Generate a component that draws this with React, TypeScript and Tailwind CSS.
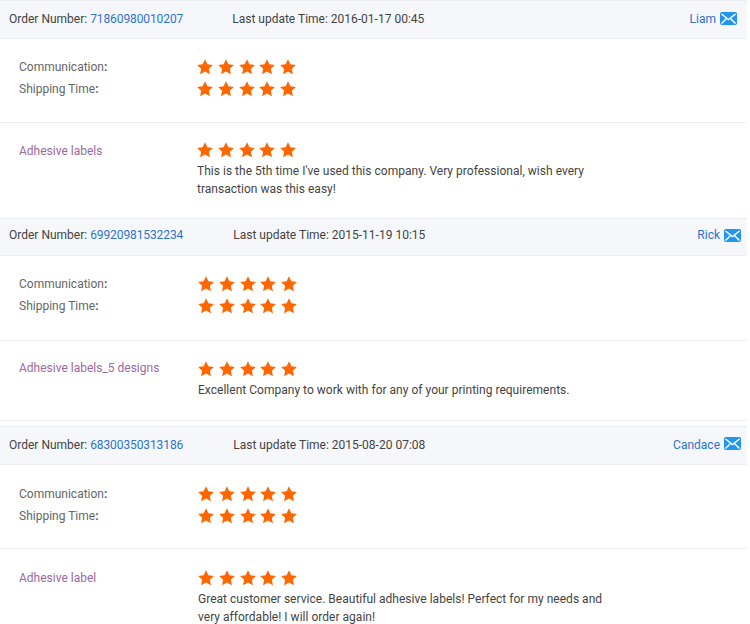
interface Review {
  order: string;
  updated: string;
  user: string;
  product: string;
  comment: string[];
  headerClass: string;
  updatedClass: string;
  iconClass: string;
  ratingsClass: string;
  productClass: string;
  labelClass: string;
  productLabelClass: string;
}

const reviews: Review[] = [
  {
    order: '71860980010207',
    updated: '2016-01-17 00:45',
    user: 'Liam',
    product: 'Adhesive labels',
    comment: [
      "This is the 5th time I've used this company. Very professional, wish every",
      'transaction was this easy!',
    ],
    headerClass: 'h-[39px] pb-px pr-[10px]',
    updatedClass: 'ml-[49px]',
    iconClass: 'mb-[2px]',
    ratingsClass: 'h-[84px] pt-[17px]',
    productClass: 'h-[95px] pt-[16px]',
    labelClass: 'w-[178px]',
    productLabelClass: 'mt-[2px]',
  },
  {
    order: '69920981532234',
    updated: '2015-11-19 10:15',
    user: 'Rick',
    product: 'Adhesive labels_5 designs',
    comment: ['Excellent Company to work with for any of your printing requirements.'],
    headerClass: 'h-[38px] pb-[4px] pr-[6px]',
    updatedClass: 'ml-[50px]',
    iconClass: '',
    ratingsClass: 'h-[85px] pt-[17px]',
    productClass: 'h-[80px] border-b border-[#eceef2] pt-[17px]',
    labelClass: 'w-[179px]',
    productLabelClass: '',
  },
  {
    order: '68300350313186',
    updated: '2015-08-20 07:08',
    user: 'Candace',
    product: 'Adhesive label',
    comment: [
      'Great customer service. Beautiful adhesive labels! Perfect for my needs and',
      'very affordable! I will order again!',
    ],
    headerClass: 'mt-[5px] h-[39px] pb-[2px] pr-[6px]',
    updatedClass: 'ml-[50px]',
    iconClass: 'mb-[2px]',
    ratingsClass: 'h-[84px] pt-[18px]',
    productClass: 'h-[96px] pt-[18px]',
    labelClass: 'w-[179px]',
    productLabelClass: 'mt-px',
  },
];

function Stars() {
  return (
    <div className="flex h-[22px] items-center gap-[4.8px]">
      {[0, 1, 2, 3, 4].map(i => (
        <svg key={i} width="16" height="16" viewBox="0 0 24 24" fill="#ff6600">
          <path d="M12 .5l3.6 7.5 8.2 1-6 5.6 1.6 8.2-7.4-4-7.4 4 1.6-8.2-6-5.6 8.2-1z" />
        </svg>
      ))}
    </div>
  );
}

function MailIcon({ className }: { className: string }) {
  return (
    <svg className={`ml-[4px] ${className}`} width="17" height="13" viewBox="0 0 17 13">
      <rect width="17" height="13" rx="2" fill="#2196ee" />
      <path d="M1.5 2l7 5.5 7-5.5M1.5 11.5l5-5M15.5 11.5l-5-5" fill="none" stroke="#fff" strokeWidth="1.5" />
    </svg>
  );
}

function ReviewCard({ review }: { review: Review }) {
  return (
    <div>
      <div className={`flex items-center border-y border-[#eceef2] bg-[#f5f7fb] pl-[9px] ${review.headerClass}`}>
        <span className="text-[#444]">Order Number: </span>
        <a className="ml-[3px] tracking-[-0.1px] text-[#2f72cc]">{review.order}</a>
        <span className={`text-[#444] ${review.updatedClass}`}>Last update Time: {review.updated}</span>
        <a className="ml-auto text-[#2f72cc]">{review.user}</a>
        <MailIcon className={review.iconClass} />
      </div>
      <div className={`flex border-b border-[#eceef2] pl-[19px] text-[#666] ${review.ratingsClass}`}>
        <div className={`leading-[22px] ${review.labelClass}`}>
          <div>Communication<b className="font-bold">:</b></div>
          <div>Shipping Time<b className="font-bold">:</b></div>
        </div>
        <div>
          <Stars />
          <Stars />
        </div>
      </div>
      <div className={`flex pl-[19px] ${review.productClass}`}>
        <div className={`leading-[20px] text-[#9b6a9f] ${review.labelClass}`}>
          <div className={review.productLabelClass}>{review.product}</div>
        </div>
        <div>
          <Stars />
          <div className="mt-[1px] leading-[18px] tracking-[0.02px] text-[#444]">
            {review.comment.map(line => (
              <div key={line}>{line}</div>
            ))}
          </div>
        </div>
      </div>
    </div>
  );
}

export default function App() {
  return (
    <div className="h-[624px] w-[750px] overflow-hidden bg-white pr-[3px] font-['Roboto',sans-serif] text-[12px]">
      {reviews.map(r => (
        <ReviewCard key={r.order} review={r} />
      ))}
    </div>
  );
}
